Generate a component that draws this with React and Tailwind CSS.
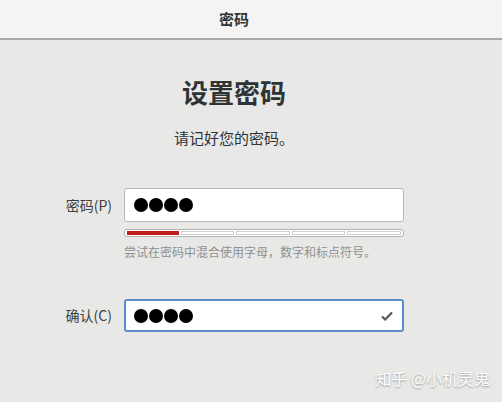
import React from "react";

const font = { fontFamily: '"Noto Sans CJK SC", "Noto Sans", sans-serif' };

const Dots = () => (
  <div className="flex gap-[1px]">
    {[0, 1, 2, 3].map((i) => (
      <span key={i} className="w-[14px] h-[14px] rounded-full bg-black" />
    ))}
  </div>
);

const StrengthBar = ({ level }) => (
  <div className="mt-[7px] h-[8px] w-full rounded-[3px] border border-[#b3b3b0] bg-white px-[2px] flex items-center gap-[2px]">
    {[0, 1, 2, 3, 4].map((i) => (
      <div
        key={i}
        className={
          i < level
            ? "flex-1 h-[4px] bg-[#c01c1c]"
            : "flex-1 h-[4px] border border-[#cfcfcd] bg-white"
        }
      />
    ))}
  </div>
);

export default function App() {
  return (
    <div className="relative w-[502px] h-[402px] bg-[#e8e8e7] overflow-hidden text-[#2e3436]" style={font}>
      {/* header bar */}
      <div className="h-[40px] bg-[#f4f4f4] border-b-2 border-[#a8a8a6] flex items-center justify-center pr-[34px]">
        <span className="text-[15px] font-bold text-[#2e3436]">密码</span>
      </div>

      <div className="flex flex-col items-center pr-[34px]">
        <h1 className="mt-[36px] text-[26px] leading-[32px] font-bold text-[#2e3436]">设置密码</h1>
        <p className="mt-[20px] text-[15px] leading-[20px]">请记好您的密码。</p>

        <div className="mt-[40px] grid grid-cols-[48px_280px] gap-x-[12px] items-start">
          <div className="h-[34px] flex items-center justify-end text-[14px] text-[#3c3f40]">密码(P)</div>
          <div className="flex flex-col">
            <div className="h-[34px] rounded-[3px] border border-[#b8b8b5] bg-white flex items-center pl-[9px]">
              <Dots />
            </div>
            <StrengthBar level={1} />
            <p className="mt-[7px] text-[12px] leading-[16px] text-[#8e9091]">
              尝试在密码中混合使用字母，数字和标点符号。
            </p>
          </div>

          <div className="mt-[39px] h-[33px] flex items-center justify-end text-[14px] text-[#3c3f40]">确认(C)</div>
          <div className="mt-[39px] h-[33px] rounded-[3px] border-2 border-[#5a8dc9] bg-white flex items-center justify-between pl-[8px] pr-[9px]">
            <Dots />
            <svg width="12" height="10" viewBox="0 0 12 10">
              <path d="M1 5.5 L4.2 8.5 L11 1.5" fill="none" stroke="#555753" strokeWidth="2.2" />
            </svg>
          </div>
        </div>
      </div>

      {/* watermark */}
      <div className="absolute right-[12px] bottom-[12px] text-[16px] text-white [text-shadow:0_1px_2px_rgba(0,0,0,0.35)]">
        知乎 @小机灵鬼
      </div>
    </div>
  );
}
